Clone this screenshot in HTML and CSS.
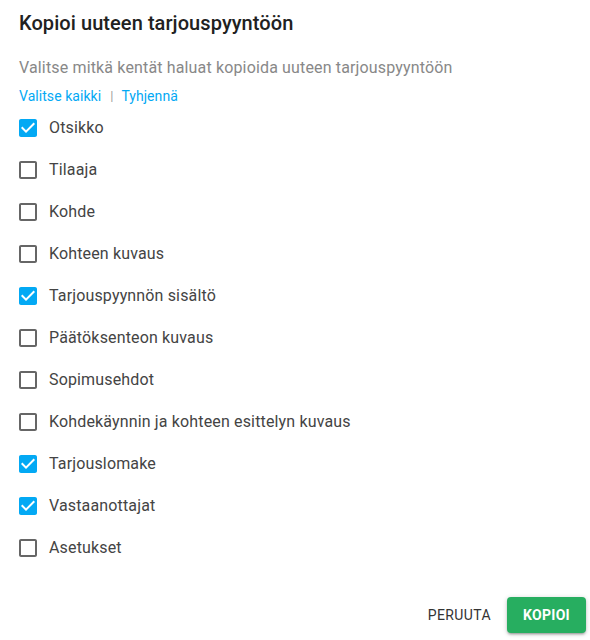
FILE: index.html
```html
<!DOCTYPE html>
<html lang="fi">
<head>
<meta charset="utf-8">
<link rel="stylesheet" href="styles.css">
</head>
<body>
<div class="dialog">
  <h2 class="title">Kopioi uuteen tarjouspyyntöön</h2>
  <p class="subtitle">Valitse mitkä kentät haluat kopioida uuteen tarjouspyyntöön</p>
  <div class="links"><a class="link">Valitse kaikki</a><span class="sep">|</span><a class="link">Tyhjennä</a></div>
  <ul class="list">
    <li class="row checked"><svg class="box" viewBox="0 0 24 24"><path d="M19 3H5c-1.11 0-2 .9-2 2v14c0 1.1.89 2 2 2h14c1.11 0 2-.9 2-2V5c0-1.1-.89-2-2-2zm-9 14l-5-5 1.41-1.41L10 14.17l7.59-7.59L19 8l-9 9z"/></svg><span class="label">Otsikko</span></li>
    <li class="row"><svg class="box" viewBox="0 0 24 24"><path d="M19 5v14H5V5h14m0-2H5c-1.1 0-2 .9-2 2v14c0 1.1.9 2 2 2h14c1.1 0 2-.9 2-2V5c0-1.1-.9-2-2-2z"/></svg><span class="label">Tilaaja</span></li>
    <li class="row"><svg class="box" viewBox="0 0 24 24"><path d="M19 5v14H5V5h14m0-2H5c-1.1 0-2 .9-2 2v14c0 1.1.9 2 2 2h14c1.1 0 2-.9 2-2V5c0-1.1-.9-2-2-2z"/></svg><span class="label">Kohde</span></li>
    <li class="row"><svg class="box" viewBox="0 0 24 24"><path d="M19 5v14H5V5h14m0-2H5c-1.1 0-2 .9-2 2v14c0 1.1.9 2 2 2h14c1.1 0 2-.9 2-2V5c0-1.1-.9-2-2-2z"/></svg><span class="label">Kohteen kuvaus</span></li>
    <li class="row checked"><svg class="box" viewBox="0 0 24 24"><path d="M19 3H5c-1.11 0-2 .9-2 2v14c0 1.1.89 2 2 2h14c1.11 0 2-.9 2-2V5c0-1.1-.89-2-2-2zm-9 14l-5-5 1.41-1.41L10 14.17l7.59-7.59L19 8l-9 9z"/></svg><span class="label">Tarjouspyynnön sisältö</span></li>
    <li class="row"><svg class="box" viewBox="0 0 24 24"><path d="M19 5v14H5V5h14m0-2H5c-1.1 0-2 .9-2 2v14c0 1.1.9 2 2 2h14c1.1 0 2-.9 2-2V5c0-1.1-.9-2-2-2z"/></svg><span class="label">Päätöksenteon kuvaus</span></li>
    <li class="row"><svg class="box" viewBox="0 0 24 24"><path d="M19 5v14H5V5h14m0-2H5c-1.1 0-2 .9-2 2v14c0 1.1.9 2 2 2h14c1.1 0 2-.9 2-2V5c0-1.1-.9-2-2-2z"/></svg><span class="label">Sopimusehdot</span></li>
    <li class="row"><svg class="box" viewBox="0 0 24 24"><path d="M19 5v14H5V5h14m0-2H5c-1.1 0-2 .9-2 2v14c0 1.1.9 2 2 2h14c1.1 0 2-.9 2-2V5c0-1.1-.9-2-2-2z"/></svg><span class="label">Kohdekäynnin ja kohteen esittelyn kuvaus</span></li>
    <li class="row checked"><svg class="box" viewBox="0 0 24 24"><path d="M19 3H5c-1.11 0-2 .9-2 2v14c0 1.1.89 2 2 2h14c1.11 0 2-.9 2-2V5c0-1.1-.89-2-2-2zm-9 14l-5-5 1.41-1.41L10 14.17l7.59-7.59L19 8l-9 9z"/></svg><span class="label">Tarjouslomake</span></li>
    <li class="row checked"><svg class="box" viewBox="0 0 24 24"><path d="M19 3H5c-1.11 0-2 .9-2 2v14c0 1.1.89 2 2 2h14c1.11 0 2-.9 2-2V5c0-1.1-.89-2-2-2zm-9 14l-5-5 1.41-1.41L10 14.17l7.59-7.59L19 8l-9 9z"/></svg><span class="label">Vastaanottajat</span></li>
    <li class="row"><svg class="box" viewBox="0 0 24 24"><path d="M19 5v14H5V5h14m0-2H5c-1.1 0-2 .9-2 2v14c0 1.1.9 2 2 2h14c1.1 0 2-.9 2-2V5c0-1.1-.9-2-2-2z"/></svg><span class="label">Asetukset</span></li>
  </ul>
  <div class="actions">
    <button class="btn btn-text">PERUUTA</button>
    <button class="btn btn-primary">KOPIOI</button>
  </div>
</div>
</body>
</html>
```
FILE: styles.css
```css
* { box-sizing: border-box; }
html, body { margin: 0; padding: 0; background: #fff; }
body { font-family: Roboto, "Noto Sans", sans-serif; color: rgba(0,0,0,0.87); letter-spacing: 0.15px; }
.dialog { width: 590px; height: 640px; padding-top: 7px; }
.title { margin: 0; padding-left: 19px; font-size: 20px; font-weight: 500; line-height: 32px; color: #212121; letter-spacing: 0.07px; }
.subtitle { margin: 17px 0 0; padding-left: 19px; font-size: 16px; line-height: 24px; color: #888; }
.links { margin-top: 6px; padding-left: 19px; font-size: 14px; line-height: 20px; display: flex; align-items: center; letter-spacing: 0.05px; }
.link { color: #03a9f4; cursor: pointer; }
.sep { color: #9e9e9e; margin: 0 8px 0 9px; font-size: 13px; }
.list { list-style: none; margin: 1px 0 0; padding: 0 0 0 16px; }
.row { height: 42px; display: flex; align-items: center; }
.box { width: 24px; height: 24px; fill: #666; flex: none; }
.row.checked .box { fill: #03a9f4; }
.label { margin-left: 9px; font-size: 16px; line-height: 24px; color: #444; }
.actions { margin-top: 28px; display: flex; justify-content: flex-end; gap: 8px; padding-right: 4px; }
.btn { font-family: Roboto, sans-serif; font-size: 14px; height: 36px; border: none; border-radius: 4px; cursor: pointer; }
.btn-text { background: transparent; color: #333; padding: 0 8px; font-weight: 400; letter-spacing: 0.4px; }
.btn-primary { width: 79px; background: #27ae60; color: #fff; font-weight: 700; letter-spacing: 0.3px; box-shadow: 0 1px 5px rgba(0,0,0,0.2), 0 2px 2px rgba(0,0,0,0.14), 0 3px 1px -2px rgba(0,0,0,0.12); }
```
